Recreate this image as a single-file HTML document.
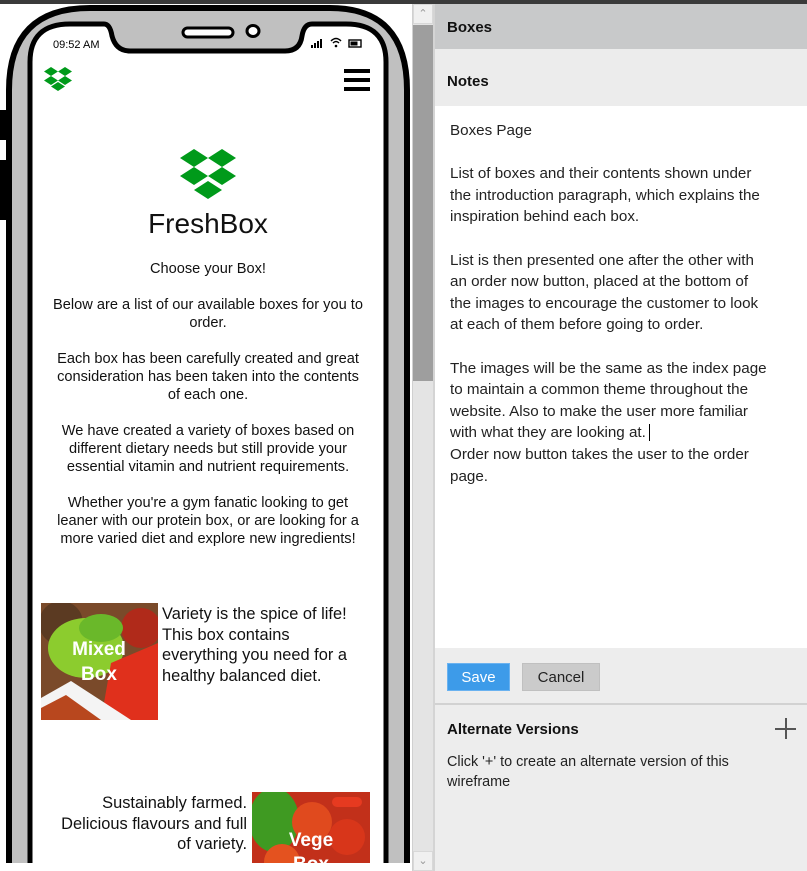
<!DOCTYPE html>
<html><head><meta charset="utf-8"><style>
*{margin:0;padding:0;box-sizing:border-box}
body{width:807px;height:871px;overflow:hidden;background:#fff;position:relative;font-family:"Liberation Sans",sans-serif}
.abs{position:absolute}
.ph{font-family:"Liberation Sans",sans-serif;color:#111;font-size:14.6px;line-height:18px;text-align:center}
.notes{font-size:15.2px;line-height:21.6px;color:#222}
</style></head><body>
<div class="abs" style="left:0;top:0;width:807px;height:4px;background:#3a3a3a"></div>

<!-- phone -->
<svg class="abs" style="left:0;top:0" width="412" height="871">
  <rect x="0" y="110" width="7" height="30" fill="#000"/>
  <rect x="0" y="160" width="7" height="60" fill="#000"/>
  <path d="M9 871 V90 Q9 8 90 8 H330 Q407 8 407 90 V871" fill="#c0c0c0" stroke="#000" stroke-width="6"/>
  <path d="M30 871 V62 Q30 24 70 24 H104 Q110 24 112 36 Q116 51 130 51 H285 Q300 51 302 36 Q304 24 312 24 H346 Q386 24 386 62 V871 Z" fill="#fff" stroke="#000" stroke-width="5"/>
  <rect x="183" y="28" width="50" height="9" rx="4.5" fill="#fff" stroke="#000" stroke-width="3"/>
  <ellipse cx="253" cy="31" rx="6" ry="5.5" fill="#fff" stroke="#000" stroke-width="3"/>
  <text x="53" y="48" font-family="Liberation Sans" font-size="11" fill="#000">09:52 AM</text>
  <rect x="311" y="45" width="2" height="3" fill="#000"/><rect x="314" y="43" width="2" height="5" fill="#000"/><rect x="317" y="41" width="2" height="7" fill="#000"/><rect x="320" y="39" width="2" height="9" fill="#000"/>
  <path d="M331 41 Q336 36 341 41 M333 43 Q336 40 339 43" stroke="#000" stroke-width="1.5" fill="none"/><circle cx="336" cy="46" r="1.3"/>
  <rect x="349" y="40" width="12" height="7" fill="none" stroke="#000" stroke-width="1.4"/><rect x="350.5" y="41.5" width="7" height="4" fill="#000"/>
  <rect x="344" y="69" width="26" height="4" fill="#000"/><rect x="344" y="78" width="26" height="4" fill="#000"/><rect x="344" y="87" width="26" height="4" fill="#000"/>
  <g fill="#009a1a" transform="translate(44,67) scale(0.5)">
    <path d="M14 0 L28 9 L14 18 L0 9Z M42 0 L56 9 L42 18 L28 9Z M14 18 L28 27 L14 36 L0 27Z M42 18 L56 27 L42 36 L28 27Z M28 30 L42 39 L28 48 L14 39Z"/>
  </g>
  <g fill="#009a1a" transform="translate(180,149)">
    <path d="M14 0 L28 9 L14 18 L0 9Z M42 0 L56 9 L42 18 L28 9Z M14 18 L28 27 L14 36 L0 27Z M42 18 L56 27 L42 36 L28 27Z M28 32 L42 41 L28 50 L14 41Z"/>
  </g>
</svg>

<div class="abs" style="left:30px;top:208px;width:356px;text-align:center;font-size:28px;color:#111;font-family:'Liberation Sans',sans-serif">FreshBox</div>
<div class="abs ph" style="left:30px;top:260px;width:356px">Choose your Box!<br><br>Below are a list of our available boxes for you to<br>order.<br><br>Each box has been carefully created and great<br>consideration has been taken into the contents<br>of each one.<br><br>We have created a variety of boxes based on<br>different dietary needs but still provide your<br>essential vitamin and nutrient requirements.<br><br>Whether you're a gym fanatic looking to get<br>leaner with our protein box, or are looking for a<br>more varied diet and explore new ingredients!</div>

<!-- mixed image -->
<svg class="abs" style="left:41px;top:603px" width="117" height="117">
  <rect width="117" height="117" fill="#7a4a2a"/>
  <circle cx="20" cy="20" r="22" fill="#5b3a22"/>
  <circle cx="100" cy="25" r="20" fill="#b02a1a"/>
  <ellipse cx="45" cy="45" rx="38" ry="30" fill="#8ccc2e"/>
  <ellipse cx="60" cy="25" rx="22" ry="14" fill="#6ab82a"/>
  <path d="M70 60 L117 40 L117 117 L60 117Z" fill="#e0301c"/>
  <path d="M0 95 L30 78 L90 117 L0 117Z" fill="#f4f4f4"/>
  <path d="M0 105 L25 92 L60 117 L0 117Z" fill="#b8471e"/>
  <text x="58" y="52" text-anchor="middle" font-family="Liberation Sans" font-weight="bold" font-size="19" fill="#fff">Mixed</text>
  <text x="58" y="77" text-anchor="middle" font-family="Liberation Sans" font-weight="bold" font-size="19" fill="#fff">Box</text>
</svg>
<div class="abs" style="left:162px;top:604px;font-size:16.4px;line-height:20.5px;color:#111;white-space:nowrap">Variety is the spice of life!<br>This box contains<br>everything you need for a<br>healthy balanced diet.</div>

<div class="abs" style="left:30px;top:793px;width:217px;text-align:right;font-size:16.4px;line-height:20.5px;color:#111;white-space:nowrap">Sustainably farmed.<br>Delicious flavours and full<br>of variety.</div>
<svg class="abs" style="left:252px;top:792px" width="118" height="71">
  <rect width="118" height="71" fill="#c2301a"/>
  <ellipse cx="22" cy="28" rx="25" ry="32" fill="#3f9a22"/>
  <circle cx="60" cy="30" r="20" fill="#e04a1e"/>
  <circle cx="95" cy="45" r="18" fill="#d8361a"/>
  <circle cx="30" cy="70" r="18" fill="#e4521f"/>
  <rect x="80" y="5" width="30" height="10" rx="5" fill="#e63a20"/>
  <text x="59" y="54" text-anchor="middle" font-family="Liberation Sans" font-weight="bold" font-size="19" fill="#fff">Vege</text>
  <text x="59" y="78" text-anchor="middle" font-family="Liberation Sans" font-weight="bold" font-size="19" fill="#fff">Box</text>
</svg>
<div class="abs" style="left:0;top:863px;width:412px;height:8px;background:#fff"></div>

<!-- scrollbar -->
<div class="abs" style="left:412px;top:4px;width:21px;height:867px;background:#e4e4e4;border-left:1px solid #d0d0d0"></div>
<div class="abs" style="left:413px;top:4px;width:20px;height:20px;background:#f0f0f0;border:1px solid #d8d8d8;color:#999;font-size:11px;text-align:center;line-height:18px">&#8963;</div>
<div class="abs" style="left:413px;top:25px;width:20px;height:356px;background:#9e9e9e"></div>
<div class="abs" style="left:413px;top:851px;width:20px;height:20px;background:#f0f0f0;border:1px solid #d8d8d8;color:#999;font-size:11px;text-align:center;line-height:18px">&#8964;</div>

<!-- right panel -->
<div class="abs" style="left:433px;top:4px;width:374px;height:867px;background:#ededed;border-left:2px solid #d4d4d4"></div>
<div class="abs" style="left:435px;top:4px;width:372px;height:45px;background:#c8c9ca;font-weight:bold;font-size:15px;line-height:48px;padding-left:12px;color:#111">Boxes</div>
<div class="abs" style="left:435px;top:49px;width:372px;height:57px;background:#ececec;font-weight:bold;font-size:15px;line-height:66px;padding-left:12px;color:#111">Notes</div>
<div class="abs" style="left:435px;top:106px;width:372px;height:542px;background:#fff"></div>
<div class="abs notes" style="left:450px;top:120px;width:355px;white-space:nowrap">Boxes Page<br><br>List of boxes and their contents shown under<br>the introduction paragraph, which explains the<br>inspiration behind each box.<br><br>List is then presented one after the other with<br>an order now button, placed at the bottom of<br>the images to encourage the customer to look<br>at each of them before going to order.<br><br>The images will be the same as the index page<br>to maintain a common theme throughout the<br>website. Also to make the user more familiar<br>with what they are looking at.<span style="border-left:1px solid #000;margin-left:3px"></span><br>Order now button takes the user to the order<br>page.</div>
<div class="abs" style="left:447px;top:663px;width:63px;height:28px;background:#3d9be9;border:1px solid #6ab2f0;color:#fff;font-size:15px;text-align:center;line-height:28px">Save</div>
<div class="abs" style="left:522px;top:663px;width:78px;height:28px;background:#cbcbcb;border:1px solid #c0c0c0;color:#222;font-size:15px;text-align:center;line-height:28px">Cancel</div>
<div class="abs" style="left:435px;top:703px;width:372px;height:2px;background:#d2d2d2"></div>
<div class="abs" style="left:447px;top:721px;font-weight:bold;font-size:15px;color:#111">Alternate Versions</div>
<div class="abs" style="left:775px;top:728px;width:21px;height:1.5px;background:#555"></div>
<div class="abs" style="left:785px;top:718px;width:1.5px;height:21px;background:#555"></div>
<div class="abs" style="left:447px;top:752px;font-size:14.4px;line-height:20px;color:#222">Click '+' to create an alternate version of this<br>wireframe</div>
</body></html>
